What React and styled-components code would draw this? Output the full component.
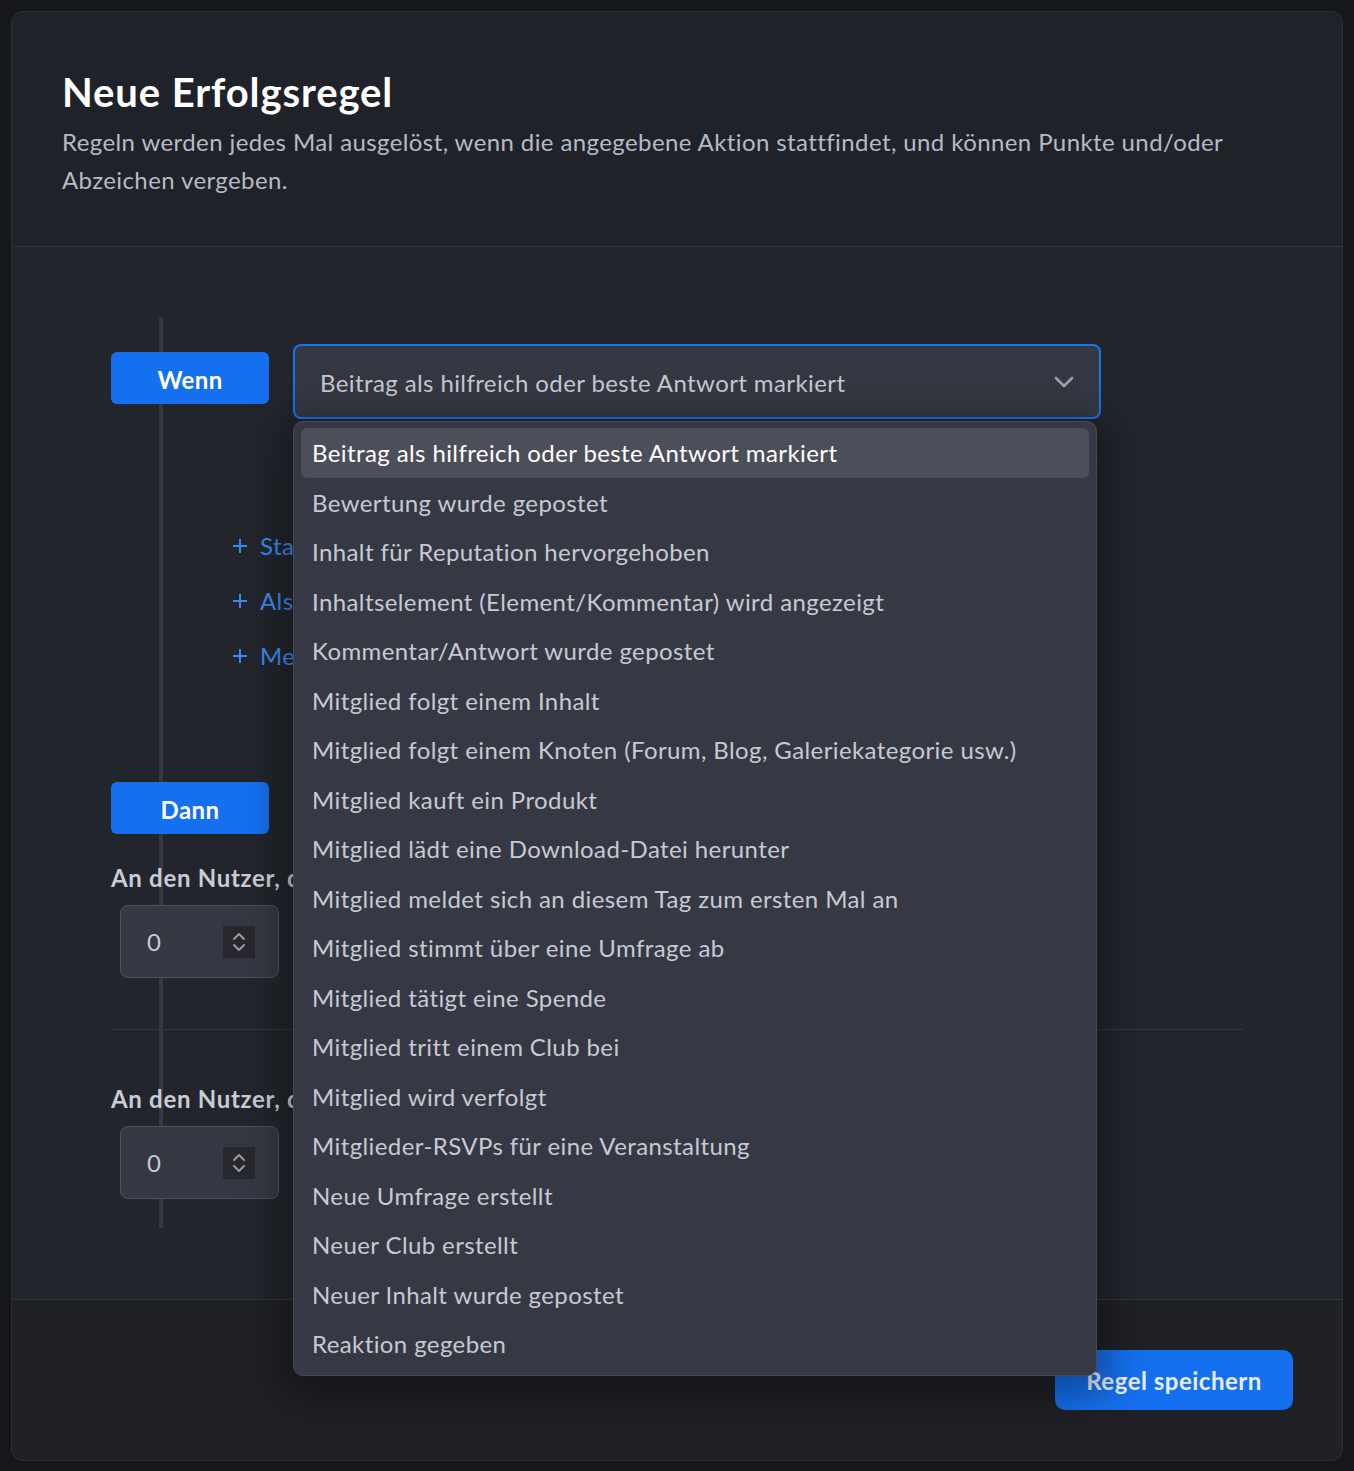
import React from "react";
import styled, { createGlobalStyle } from "styled-components";

const GlobalStyle = createGlobalStyle`
  html, body {
    margin: 0;
    background: #16171b;
  }
  body {
    font-family: Lato, "Noto Sans", "Liberation Sans", sans-serif;
    letter-spacing: 0.4px;
  }
  * {
    box-sizing: border-box;
  }
`;

const Page = styled.div`
  padding: 11px;
`;

const Card = styled.div`
  border: 1px solid #2e3037;
  border-radius: 12px;
  background: #22252c;
`;

const Header = styled.div`
  padding: 57px 62px 47px 50px;
  background: #202229;
  border-bottom: 1px solid #31343b;
  border-radius: 12px 12px 0 0;
`;

const Title = styled.h1`
  margin: 0 0 8px;
  font-size: 40px;
  line-height: 46px;
  font-weight: 700;
  letter-spacing: 0.9px;
  color: #ffffff;
`;

const Subtitle = styled.p`
  margin: 0;
  font-size: 24px;
  line-height: 38px;
  color: #b5bbc5;
`;

const Body = styled.div`
  padding: 70px 99px 71px;
`;

const Timeline = styled.div`
  position: relative;
  padding: 27px 0 29px;

  &::before {
    content: "";
    position: absolute;
    top: 0;
    bottom: 0;
    left: 48px;
    width: 4px;
    background: #353840;
  }
`;

const Row = styled.div`
  position: relative;
  display: flex;
  align-items: flex-start;
  gap: 24px;
`;

const StepBadge = styled.div`
  position: relative;
  width: 158px;
  height: 52px;
  padding-top: 3px;
  border-radius: 6px;
  background: #1570ef;
  color: #ffffff;
  font-size: 24px;
  font-weight: 700;
  display: flex;
  align-items: center;
  justify-content: center;
  margin-top: ${(p) => p.$top || 0}px;
`;

const SelectWrap = styled.div`
  position: relative;
  width: 808px;
`;

const SelectBox = styled.div`
  height: 75px;
  border: 2px solid #1a72ee;
  border-radius: 8px;
  background: #353842;
  display: flex;
  align-items: center;
  justify-content: space-between;
  padding: 2px 25px 0;
  font-size: 24px;
  color: #c5c9d0;
`;

const Menu = styled.div`
  position: absolute;
  top: 77px;
  left: 0;
  width: 804px;
  padding: 6px 7px;
  background: #363944;
  border: 1px solid #474a53;
  border-radius: 10px;
  box-shadow: 0 10px 40px 12px rgba(0, 0, 0, 0.35);
  z-index: 10;
`;

const MenuItem = styled.div`
  height: 49.5px;
  display: flex;
  align-items: center;
  padding: 0 11px;
  border-radius: 6px;
  font-size: 24px;
  color: ${(p) => (p.$active ? "#ffffff" : "#c5cad3")};
  background: ${(p) => (p.$active ? "#4c4f59" : "transparent")};
  white-space: nowrap;
`;

const Links = styled.div`
  position: relative;
  display: flex;
  flex-direction: column;
  gap: 25px;
  margin-top: 112px;
  padding-left: 121px;
`;

const AddLink = styled.div`
  display: flex;
  align-items: center;
  gap: 12px;
  font-size: 24px;
  line-height: 30px;
  color: #3d8bf2;
  white-space: nowrap;
`;

const Label = styled.div`
  position: relative;
  margin-top: ${(p) => p.$top}px;
  font-size: 24px;
  line-height: 32px;
  font-weight: 700;
  letter-spacing: 0.7px;
  color: #c8cdd5;
  white-space: nowrap;
`;

const NumberInput = styled.div`
  position: relative;
  width: 159px;
  height: 73px;
  margin: 11px 0 0 9px;
  border: 1px solid #50535b;
  border-radius: 8px;
  background: #353842;
  display: flex;
  align-items: center;
  justify-content: space-between;
  padding: 0 23px 0 26px;
  font-size: 24px;
  color: #c5cad3;
`;

const Spinner = styled.div`
  width: 32px;
  height: 32px;
  background: #27282e;
  display: flex;
  align-items: center;
  justify-content: center;
`;

const Divider = styled.div`
  position: relative;
  height: 1px;
  margin-top: 51px;
  background: #34373e;
`;

const Footer = styled.div`
  display: flex;
  justify-content: flex-end;
  padding: 50px 49px;
  background: #1f2127;
  border-top: 1px solid #34363d;
  border-radius: 0 0 12px 12px;
`;

const SaveButton = styled.div`
  width: 238px;
  height: 60px;
  border-radius: 10px;
  background: #1570ef;
  color: #e8eef8;
  font-size: 24px;
  font-weight: 700;
  letter-spacing: 0.5px;
  display: flex;
  align-items: center;
  justify-content: center;
`;

const Chevron = () => (
  <svg width="20" height="13" viewBox="0 0 20 13">
    <polyline
      points="2,2 10,10 18,2"
      fill="none"
      stroke="#9ea1a8"
      strokeWidth="2.6"
      strokeLinecap="round"
      strokeLinejoin="round"
    />
  </svg>
);

const PlusIcon = () => (
  <svg width="16" height="16" viewBox="0 0 16 16">
    <path d="M8 1v14M1 8h14" stroke="#3d8bf2" strokeWidth="2" />
  </svg>
);

const SpinIcon = () => (
  <svg width="16" height="24" viewBox="0 0 16 24">
    <polyline points="3,9 8,4 13,9" fill="none" stroke="#9a9aa0" strokeWidth="2" strokeLinecap="round" strokeLinejoin="round" />
    <polyline points="3,15 8,20 13,15" fill="none" stroke="#9a9aa0" strokeWidth="2" strokeLinecap="round" strokeLinejoin="round" />
  </svg>
);

const options = [
  "Beitrag als hilfreich oder beste Antwort markiert",
  "Bewertung wurde gepostet",
  "Inhalt für Reputation hervorgehoben",
  "Inhaltselement (Element/Kommentar) wird angezeigt",
  "Kommentar/Antwort wurde gepostet",
  "Mitglied folgt einem Inhalt",
  "Mitglied folgt einem Knoten (Forum, Blog, Galeriekategorie usw.)",
  "Mitglied kauft ein Produkt",
  "Mitglied lädt eine Download-Datei herunter",
  "Mitglied meldet sich an diesem Tag zum ersten Mal an",
  "Mitglied stimmt über eine Umfrage ab",
  "Mitglied tätigt eine Spende",
  "Mitglied tritt einem Club bei",
  "Mitglied wird verfolgt",
  "Mitglieder-RSVPs für eine Veranstaltung",
  "Neue Umfrage erstellt",
  "Neuer Club erstellt",
  "Neuer Inhalt wurde gepostet",
  "Reaktion gegeben",
];

const conditions = [
  "Standort einschränken",
  "Als erste Antwort",
  "Mehr Bedingungen hinzufügen",
];

const NumberField = () => (
  <NumberInput>
    <span>0</span>
    <Spinner>
      <SpinIcon />
    </Spinner>
  </NumberInput>
);

const App = () => (
  <Page>
    <GlobalStyle />
    <Card>
      <Header>
        <Title>Neue Erfolgsregel</Title>
        <Subtitle>
          Regeln werden jedes Mal ausgelöst, wenn die angegebene Aktion
          stattfindet, und können Punkte und/oder Abzeichen vergeben.
        </Subtitle>
      </Header>
      <Body>
        <Timeline>
          <Row>
            <StepBadge $top={8}>Wenn</StepBadge>
            <SelectWrap>
              <SelectBox>
                <span>{options[0]}</span>
                <Chevron />
              </SelectBox>
              <Menu>
                {options.map((o, i) => (
                  <MenuItem key={o} $active={i === 0}>
                    {o}
                  </MenuItem>
                ))}
              </Menu>
            </SelectWrap>
          </Row>
          <Links>
            {conditions.map((c) => (
              <AddLink key={c}>
                <PlusIcon />
                {c}
              </AddLink>
            ))}
          </Links>
          <StepBadge $top={111}>Dann</StepBadge>
          <Label $top={28}>An den Nutzer, der die Aktion ausgeführt hat, vergeben</Label>
          <NumberField />
          <Divider />
          <Label $top={53}>An den Nutzer, dessen Inhalt betroffen ist, vergeben</Label>
          <NumberField />
        </Timeline>
      </Body>
      <Footer>
        <SaveButton>Regel speichern</SaveButton>
      </Footer>
    </Card>
  </Page>
);

export default App;
